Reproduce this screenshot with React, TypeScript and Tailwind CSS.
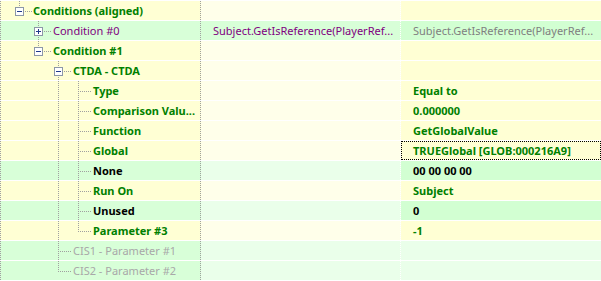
import React from "react";

type Kind = "open" | "closed" | "leaf";

type Row = {
  label: string;
  level: number;
  kind: Kind;
  green?: boolean;
  last?: boolean;
  guides?: number[];
  labelClass: string;
  v2?: string;
  v2Class?: string;
  c2Full?: boolean;
  v3?: string;
  v3Class?: string;
  c3Light?: boolean;
  focus?: boolean;
};

const CX = [18, 37, 57, 77];
const TX = [33, 53, 73, 93];
const PAD = ["pl-[33px]", "pl-[53px]", "pl-[73px]", "pl-[93px]"];

const G = "font-bold text-[#008000]";
const K = "font-bold text-black";

const rows: Row[] = [
  { label: "Conditions (aligned)", level: 0, kind: "open", last: true, labelClass: G },
  {
    label: "Condition #0",
    level: 1,
    kind: "closed",
    green: true,
    labelClass: "text-[#800080]",
    v2: "Subject.GetIsReference(PlayerRef...",
    v2Class: "text-[#800080]",
    c2Full: true,
    v3: "Subject.GetIsReference(PlayerRef...",
    v3Class: "text-[#808080]",
  },
  { label: "Condition #1", level: 1, kind: "open", last: true, labelClass: G },
  { label: "CTDA - CTDA", level: 2, kind: "open", labelClass: G },
  { label: "Type", level: 3, kind: "leaf", guides: [2], labelClass: G, v3: "Equal to", v3Class: G },
  { label: "Comparison Valu...", level: 3, kind: "leaf", guides: [2], labelClass: G, v3: "0.000000", v3Class: G },
  { label: "Function", level: 3, kind: "leaf", guides: [2], labelClass: G, v3: "GetGlobalValue", v3Class: G },
  {
    label: "Global",
    level: 3,
    kind: "leaf",
    guides: [2],
    labelClass: G,
    v3: "TRUEGlobal [GLOB:000216A9]",
    v3Class: G,
    focus: true,
  },
  { label: "None", level: 3, kind: "leaf", guides: [2], green: true, labelClass: K, v3: "00 00 00 00", v3Class: K },
  { label: "Run On", level: 3, kind: "leaf", guides: [2], labelClass: G, v3: "Subject", v3Class: G },
  { label: "Unused", level: 3, kind: "leaf", guides: [2], green: true, labelClass: K, v3: "0", v3Class: K },
  { label: "Parameter #3", level: 3, kind: "leaf", guides: [2], last: true, labelClass: G, v3: "-1", v3Class: G },
  { label: "CIS1 - Parameter #1", level: 2, kind: "leaf", green: true, labelClass: "text-[#a8a8a8]", c3Light: true },
  {
    label: "CIS2 - Parameter #2",
    level: 2,
    kind: "leaf",
    green: true,
    last: true,
    labelClass: "text-[#a8a8a8]",
    c3Light: true,
  },
];

const LINE = "#a0a0a0";

function TreeLines({ row }: { row: Row }) {
  const cx = CX[row.level];
  const tx = TX[row.level];
  const x = cx + 0.5;
  return (
    <svg className="absolute left-0 top-0" width="200" height="20" shapeRendering="crispEdges">
      {(row.guides || []).map((l) => (
        <line key={l} x1={CX[l] + 0.5} y1="0" x2={CX[l] + 0.5} y2="20" stroke={LINE} strokeDasharray="1 1" />
      ))}
      <line x1={x} y1="0" x2={x} y2={row.last ? 11 : 20} stroke={LINE} strokeDasharray="1 1" />
      {row.kind === "leaf" ? (
        <line x1={cx + 2} y1="10.5" x2={tx - 2} y2="10.5" stroke={LINE} strokeDasharray="1 1" />
      ) : (
        <>
          <line x1={cx + 6} y1="10.5" x2={tx - 2} y2="10.5" stroke={LINE} strokeDasharray="1 1" />
          <rect x={cx - 3.5} y="6.5" width="8" height="8" fill="#ffffff" stroke="#8c97a8" />
          <line x1={cx - 2} y1="10.5" x2={cx + 3} y2="10.5" stroke="#1f3a8a" />
          {row.kind === "closed" && <line x1={x} y1="8" x2={x} y2="13" stroke="#1f3a8a" />}
        </>
      )}
    </svg>
  );
}

export default function App() {
  return (
    <div
      className="w-[601px] h-[281px] overflow-hidden bg-white text-[11px] leading-[19px]"
      style={{ fontFamily: '"Noto Sans", "Open Sans", sans-serif' }}
    >
      {rows.map((r, i) => {
        const c1 = r.green ? "bg-[#d8ffd8]" : "bg-[#ffffd4]";
        const c2 = r.c2Full ? "bg-[#d8ffd8]" : r.green ? "bg-[#eaffea]" : "bg-[#ffffea]";
        const c3 = r.c3Light ? "bg-[#eaffea]" : r.green ? "bg-[#d2ffd2]" : "bg-[#ffffd4]";
        return (
          <div key={i} className="flex h-[20px] border-t border-dotted border-white">
            <div
              className={`relative w-[201px] shrink-0 border-l border-r border-dotted border-l-[#a0a0a0] border-r-[#a0a0a0] ${c1}`}
            >
              <TreeLines row={r} />
              <div className={`relative whitespace-nowrap overflow-hidden ${PAD[r.level]} -ml-px ${r.labelClass}`}>
                {r.label}
              </div>
            </div>
            <div className={`w-[200px] shrink-0 border-r border-dotted border-white pl-[12px] whitespace-nowrap overflow-hidden ${c2}`}>
              {r.v2 && <span className={r.v2Class}>{r.v2}</span>}
            </div>
            <div className={`flex-1 whitespace-nowrap overflow-hidden ${c3}`}>
              {r.focus ? (
                <div className="h-[19px] border border-dotted border-black pl-[11px] leading-[17px]">
                  <span className={r.v3Class}>{r.v3}</span>
                </div>
              ) : (
                <div className="pl-[12px]">{r.v3 && <span className={r.v3Class}>{r.v3}</span>}</div>
              )}
            </div>
          </div>
        );
      })}
      <div className="border-t border-dotted border-white" />
    </div>
  );
}
